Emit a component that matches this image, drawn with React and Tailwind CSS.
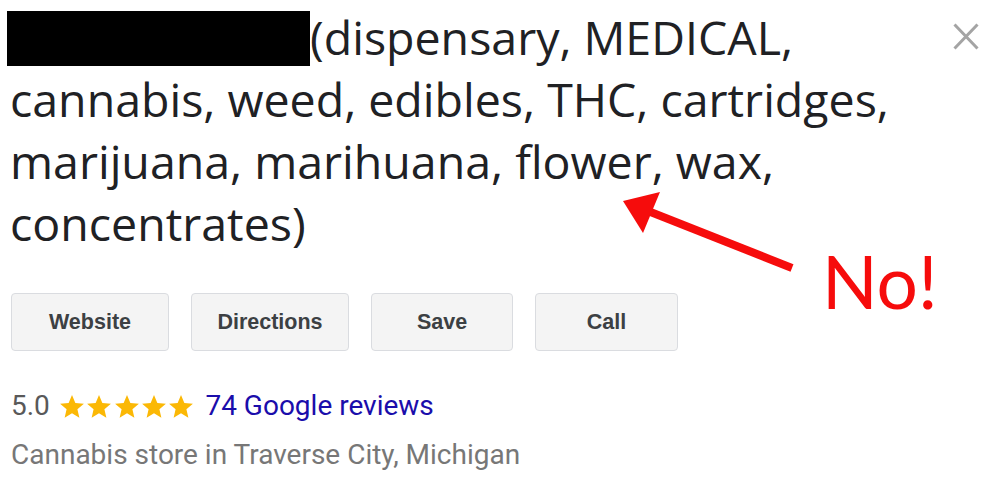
import { useState } from "react";

const buttons = [
  { label: "Website", w: "w-[158px]" },
  { label: "Directions", w: "w-[158px]" },
  { label: "Save", w: "w-[142px]" },
  { label: "Call", w: "w-[143px]" },
];

function Star() {
  return (
    <svg viewBox="2 2 20 19.3" className="h-[23px] w-[24px] shrink-0" fill="#fbb805">
      <path d="M12 17.27L18.18 21l-1.64-7.03L22 9.24l-7.19-.61L12 2 9.19 8.63 2 9.24l5.46 4.73L5.82 21z" />
    </svg>
  );
}

export default function App() {
  const [open, setOpen] = useState(true);

  return (
    <div className="relative h-[493px] w-[986px] overflow-hidden bg-white">
      <div className="flex items-start justify-between">
        <h1 className="pl-[7px] pt-[6px] font-['Open_Sans',sans-serif] text-[46.5px] font-normal leading-[62px] text-[#202124]">
          <span className="mt-[5px] inline-block h-[55px] w-[303px] bg-black align-top"></span>
          (dispensary, MEDICAL,
          <br />
          <span className="pl-[3px]">cannabis, weed, edibles, THC, cartridges,</span>
          <br />
          <span className="pl-[3px]">marijuana, marihuana, flower, wax,</span>
          <br />
          <span className="pl-[3px]">concentrates)</span>
        </h1>
        <button
          onClick={() => setOpen(!open)}
          className="mr-[7px] mt-[23px] flex h-[27px] w-[26px] items-center justify-center"
          aria-label="Close"
        >
          <svg viewBox="0 0 26 27" className="h-[27px] w-[26px]" stroke="#a4a4a4" strokeWidth="3">
            <path d="M1.5 1.5l23 24M24.5 1.5l-23 24" />
          </svg>
        </button>
      </div>

      <div className="mt-[39px] flex gap-[22px] pl-[11px]">
        {buttons.map((b) => (
          <button
            key={b.label}
            className={`${b.w} h-[58px] rounded-[4px] border-[1.5px] border-[#dadce0] bg-[#f4f4f4] font-['Liberation_Sans',Arial,sans-serif] text-[21.5px] font-bold text-[#3c4043]`}
          >
            {b.label}
          </button>
        ))}
      </div>

      <div className="mt-[39px] flex items-center pl-[11px] font-['Roboto',sans-serif] text-[28px] leading-[32px]">
        <span className="text-[#595959]">5.0</span>
        <div className="ml-[10px] mr-[12px] flex gap-[3.4px]">
          <Star />
          <Star />
          <Star />
          <Star />
          <Star />
        </div>
        <a href="#" className="text-[#1a0dab]">74 Google reviews</a>
      </div>
      <p className="mt-[17px] pl-[11px] font-['Roboto',sans-serif] text-[28px] leading-[32px] text-[#777777]">
        Cannabis store in Traverse City, Michigan
      </p>

      <svg className="pointer-events-none absolute inset-0 h-[493px] w-[986px]" viewBox="0 0 986 493">
        <line x1="792" y1="268" x2="648" y2="211" stroke="#f60c0c" strokeWidth="8" />
        <polygon points="623,201 660,192 643,233" fill="#f60c0c" />
      </svg>
      <span className="pointer-events-none absolute left-[822px] top-[236px] font-['Lato',sans-serif] text-[73px] leading-[90px] text-[#f60c0c]">
        No!
      </span>
    </div>
  );
}
